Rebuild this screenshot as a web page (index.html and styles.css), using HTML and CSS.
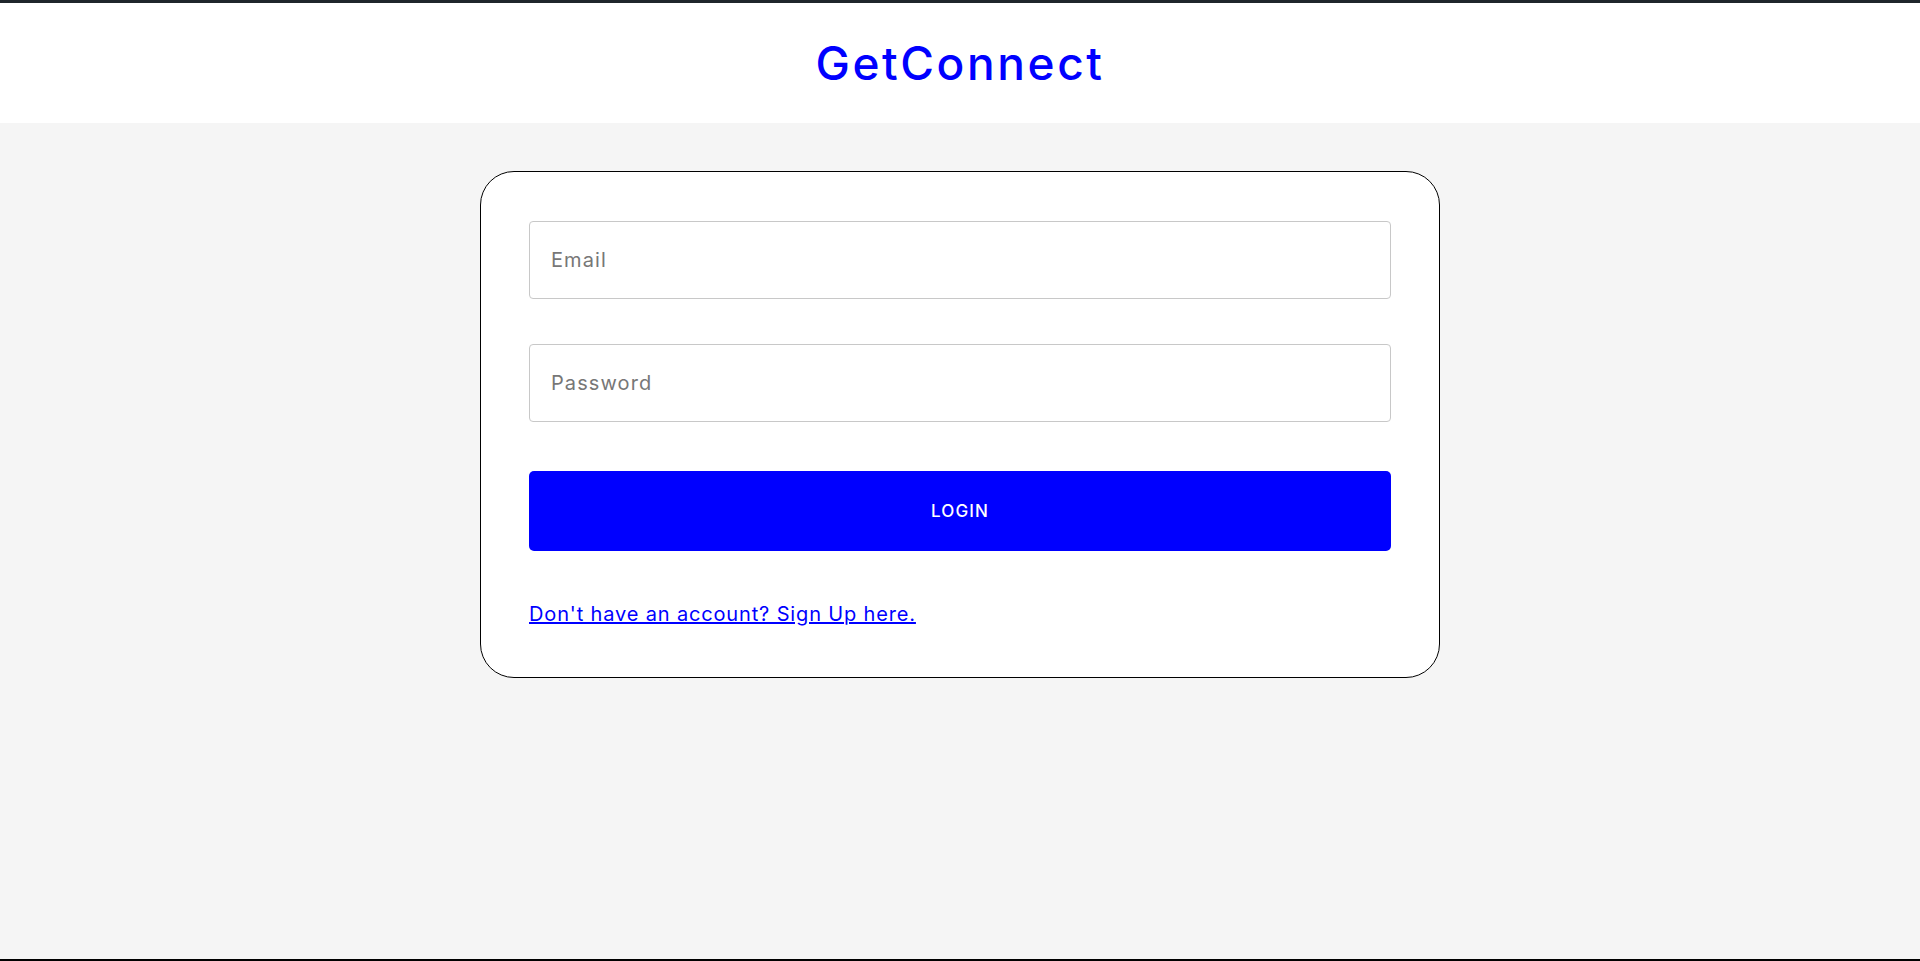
FILE: index.html
```html
<!DOCTYPE html>
<html lang="en">
<head>
<meta charset="utf-8">
<title>GetConnect</title>
<link rel="stylesheet" href="styles.css">
</head>
<body>
<div class="app">
  <header class="topbar">
    <h1 class="brand">GetConnect</h1>
  </header>
  <main class="content">
    <form class="card">
      <input class="field" type="email" placeholder="Email">
      <input class="field field-password" type="password" placeholder="Password">
      <button class="btn" type="button">LOGIN</button>
      <p class="signup"><a href="#" class="signup-link">Don't have an account? Sign Up here.</a></p>
    </form>
  </main>
</div>
</body>
</html>
```
FILE: styles.css
```css
* { box-sizing: border-box; }
html, body { height: 100%; }
body {
  margin: 0;
  font-family: Inter, "Open Sans", "Liberation Sans", sans-serif;
  background: #f5f5f5;
}
.app {
  min-height: 100%;
  display: flex;
  flex-direction: column;
  border-top: 3px solid #1f262b;
  border-bottom: 2px solid #000;
}
.topbar {
  height: 120px;
  background: #fff;
  display: flex;
  align-items: center;
  justify-content: center;
}
.brand {
  margin: 0;
  font-size: 46px;
  font-weight: 500;
  color: #0000ff;
  letter-spacing: 2.6px;
  line-height: 1;
}
.content {
  flex: 1;
  display: flex;
  flex-direction: column;
  align-items: center;
  padding-top: 48px;
}
.card {
  width: 960px;
  background: #fff;
  border: 1px solid #000;
  border-radius: 34px;
  padding: 49px 48px 48px;
  display: flex;
  flex-direction: column;
}
.field {
  height: 78px;
  border: 1px solid #c8c8c8;
  border-radius: 4px;
  padding: 0 21px;
  font-family: inherit;
  font-size: 20px;
  letter-spacing: 1.1px;
  color: #333;
  outline: none;
  margin: 0 0 45px;
}
.field::placeholder { color: #777; }
.field-password { margin-bottom: 49px; }
.btn {
  height: 80px;
  border: none;
  border-radius: 5px;
  background: #0000ff;
  color: #fff;
  font-family: inherit;
  font-size: 17px;
  font-weight: 500;
  letter-spacing: 1.1px;
  cursor: pointer;
  margin: 0 0 48px;
}
.signup {
  margin: 0;
  font-size: 20px;
  line-height: 30px;
  letter-spacing: 0.85px;
}
.signup-link {
  color: #0000ff;
  text-decoration: underline;
}
```
